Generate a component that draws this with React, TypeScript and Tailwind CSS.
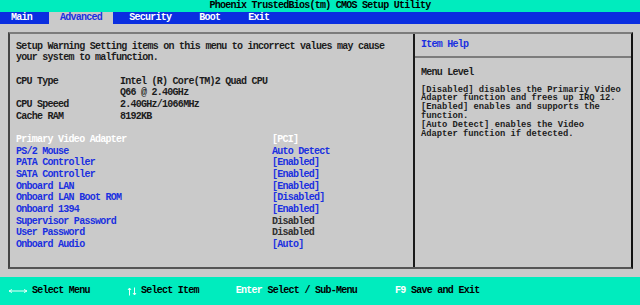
const FONT = "font-['Liberation_Mono',monospace] font-bold text-[10px] tracking-[-0.74px]";

const INFO = [
  { label: 'CPU Type', value: 'Intel (R) Core(TM)2 Quad CPU' },
  { label: '', value: 'Q66 @ 2.40GHz' },
  { label: 'CPU Speeed', value: '2.40GHz/1066MHz' },
  { label: 'Cache RAM', value: '8192KB' },
];

type Item = { label: string; value: string; kind: 'sel' | 'opt' | 'fixed' };

const ITEMS: Item[] = [
  { label: 'Primary Video Adapter', value: '[PCI]', kind: 'sel' },
  { label: 'PS/2 Mouse', value: 'Auto Detect', kind: 'opt' },
  { label: 'PATA Controller', value: '[Enabled]', kind: 'opt' },
  { label: 'SATA Controller', value: '[Enabled]', kind: 'opt' },
  { label: 'Onboard LAN', value: '[Enabled]', kind: 'opt' },
  { label: 'Onboard LAN Boot ROM', value: '[Disabled]', kind: 'opt' },
  { label: 'Onboard 1394', value: '[Enabled]', kind: 'opt' },
  { label: 'Supervisor Password', value: 'Disabled', kind: 'fixed' },
  { label: 'User Password', value: 'Disabled', kind: 'fixed' },
  { label: 'Onboard Audio', value: '[Auto]', kind: 'opt' },
];

const HELP = [
  '[Disabled] disables the Primariy Video',
  'Adapter function and frees up IRQ 12.',
  '[Enabled] enables and supports the',
  'function.',
  '[Auto Detect] enables the Video',
  'Adapter function if detected.',
];

function Row({ children }: { children: React.ReactNode }) {
  return <div className="flex h-[11.67px] items-center whitespace-pre">{children}</div>;
}

export default function App() {
  return (
    <div className={`w-[640px] h-[305px] bg-[#cacaca] flex flex-col text-[#1c1c1c] leading-none ${FONT}`}>
      {/* title */}
      <div className="h-[12px] bg-[#00ecbe] flex items-center justify-center text-black whitespace-pre">
        Phoenix TrustedBios(tm) CMOS Setup Utility
      </div>

      {/* menu bar */}
      <div className="h-[12px] bg-[#0a2ee0] flex items-stretch text-white whitespace-pre">
        <span className="ml-[11px] flex items-center">Main</span>
        <span className="ml-[17px] px-[11px] bg-[#cacaca] text-[#1a30e0] flex items-center">Advanced</span>
        <span className="ml-[16px] flex items-center">Security</span>
        <span className="ml-[28px] flex items-center">Boot</span>
        <span className="ml-[28px] flex items-center">Exit</span>
      </div>

      {/* frame */}
      <div className="mt-[8px] ml-[8px] w-[625px] h-[237px] flex border-t-2 border-t-[#7c7c7c] border-l-2 border-l-[#444444] border-b-2 border-b-[#555555] border-r-2 border-r-[#111111]">
        <div className="w-[403px] pl-[6px] pt-[7px]">
          <Row>Setup Warning Setting items on this menu to incorrect values may cause</Row>
          <Row>your system to malfunction.</Row>
          <Row> </Row>
          {INFO.map((r, i) => (
            <Row key={i}>
              <span className="w-[104px]">{r.label}</span>
              <span>{r.value}</span>
            </Row>
          ))}
          <Row> </Row>
          {ITEMS.map((it) => (
            <Row key={it.label}>
              <span className={`w-[256px] ${it.kind === 'sel' ? 'text-white' : 'text-[#1a30e0]'}`}>{it.label}</span>
              <span
                className={
                  it.kind === 'sel' ? 'text-white' : it.kind === 'fixed' ? 'text-[#303030]' : 'text-[#1a30e0]'
                }
              >
                {it.value}
              </span>
            </Row>
          ))}
        </div>

        <div className="flex-1 border-l-2 border-l-[#1a1a1a] flex flex-col">
          <div className="h-[24px] pl-[6px] flex items-center text-[#1a30e0] border-b-2 border-b-[#7c7c7c]">
            Item Help
          </div>
          <div className="pl-[6px] pt-[9px]">
            <Row>Menu Level</Row>
            <div className="mt-[7px] text-[8.8px] leading-[8.8px] tracking-[-0.02px]">
              {HELP.map((l, i) => (
                <div key={i} className="h-[8.8px] whitespace-pre">
                  {l}
                </div>
              ))}
            </div>
          </div>
        </div>
      </div>

      {/* footer */}
      <div className="mt-auto h-[28px] bg-[#00ecbe] flex items-center text-black whitespace-pre">
        <svg className="ml-[8px]" width="20" height="6" viewBox="0 0 20 6" fill="none" stroke="#e8fff8" strokeWidth="1">
          <path d="M1 3H19M1 3L4 1.5M1 3L4 4.5M19 3L16 1.5M19 3L16 4.5" />
        </svg>
        <span className="ml-[4px]">Select Menu</span>
        <svg className="ml-[37px]" width="10" height="9" viewBox="0 0 10 9" fill="none" stroke="#e8fff8" strokeWidth="1">
          <path d="M2.5 1V8.5M2.5 1L1 3M2.5 1L4 3M7.5 0.5V8M7.5 8L6 6M7.5 8L9 6" />
        </svg>
        <span className="ml-[4px]">Select Item</span>
        <span className="ml-[37px] text-white">Enter</span>
        <span className="ml-[5.5px]">Select / Sub-Menu</span>
        <span className="ml-[38px] text-white">F9</span>
        <span className="ml-[5.5px]">Save and Exit</span>
      </div>
    </div>
  );
}
